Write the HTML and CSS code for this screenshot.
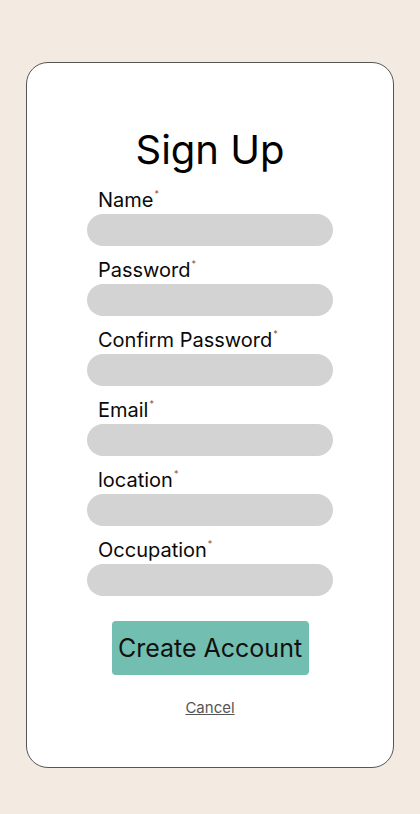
FILE: index.html
```
<!DOCTYPE html>
<html>
<head>
<meta charset="utf-8">
<link rel="stylesheet" href="styles.css">
</head>
<body>
<div class="page">
  <div class="card">
    <h1 class="title">Sign Up</h1>
    <form class="form">
      <div class="field"><label class="label">Name<span class="req">*</span></label><div class="input"></div></div>
      <div class="field"><label class="label">Password<span class="req">*</span></label><div class="input"></div></div>
      <div class="field"><label class="label">Confirm Password<span class="req">*</span></label><div class="input"></div></div>
      <div class="field"><label class="label">Email<span class="req">*</span></label><div class="input"></div></div>
      <div class="field"><label class="label">location<span class="req">*</span></label><div class="input"></div></div>
      <div class="field"><label class="label">Occupation<span class="req">*</span></label><div class="input"></div></div>
    </form>
    <div class="actions">
      <div class="btn">Create Account</div>
      <div class="cancel">Cancel</div>
    </div>
  </div>
</div>
</body>
</html>
```
FILE: styles.css
```
html, body {
  margin: 0;
  padding: 0;
  background: #f3ebe1;
  font-family: Inter, "Noto Sans", sans-serif;
  color: #111;
}
.page {
  width: 420px;
  height: 814px;
  padding: 62px 26px 0 26px;
  box-sizing: border-box;
}
.card {
  width: 368px;
  height: 706px;
  box-sizing: border-box;
  background: #fff;
  border: 1.5px solid #555;
  border-radius: 22px;
  display: flex;
  flex-direction: column;
  align-items: center;
  padding-top: 63px;
}
.title {
  margin: 0;
  font-weight: 400;
  font-size: 40px;
  line-height: 48px;
  color: #000;
}
.form {
  display: flex;
  flex-direction: column;
  gap: 12px;
  width: 246px;
  margin-top: 14px;
}
.field {
  display: flex;
  flex-direction: column;
}
.label {
  font-size: 20px;
  line-height: 24px;
  height: 24px;
  margin-bottom: 2px;
  padding-left: 11px;
  color: #0a0a0a;
}
.req {
  font-size: 9px;
  line-height: 0;
  vertical-align: 10px;
  color: #8e4a33;
  margin-left: 1px;
}
.input {
  height: 32px;
  background: #d3d3d3;
  border-radius: 16px;
}
.actions {
  display: flex;
  flex-direction: column;
  align-items: center;
  margin-top: 25px;
}
.btn {
  width: 197px;
  height: 54px;
  background: #72bfb1;
  border-radius: 4px;
  display: flex;
  align-items: center;
  justify-content: center;
  font-size: 25px;
  color: #111;
}
.cancel {
  margin-top: 24px;
  font-size: 15px;
  line-height: 18px;
  color: #555;
  text-decoration: underline;
}
```
